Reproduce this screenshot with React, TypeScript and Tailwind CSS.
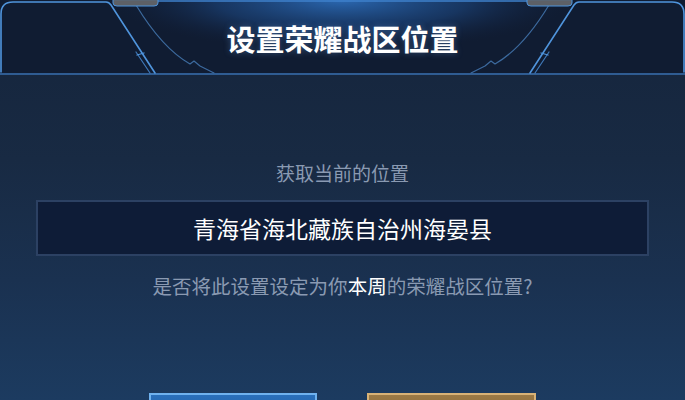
import React from "react";

const CJK = { fontFamily: '"Noto Sans CJK SC", "Noto Sans", sans-serif' };

function HeaderFrame() {
  const side = (
    <g fill="none" strokeLinecap="round" strokeLinejoin="round">
      {/* outer frame edge running into the diagonal */}
      <path d="M1,72 L1,14 Q1,2 13,2 L106,2 Q109,2 111,5 L155,73" stroke="#4f94dc" strokeWidth="1.6" />
      {/* small bracket on the diagonal */}
      <path d="M136,52 L150,73" stroke="#3f78b8" strokeWidth="1.2" />
      <path d="M137,55 L144,53" stroke="#4f94dc" strokeWidth="1.3" />
      {/* inner arc with notch */}
      <path d="M136,5 Q162,48 190,64 L194,61 L200,66 L214,73" stroke="#3c6a9e" strokeWidth="1.2" />
      {/* tab at top */}
      <path d="M113,0 L113,3 Q113,6 117,6 L154,6 Q158,6 158,3 L158,0 Z" fill="#5d6066" stroke="#4f94dc" strokeWidth="1" />
    </g>
  );
  return (
    <svg className="absolute inset-0" width="685" height="74" viewBox="0 0 685 74">
      <defs>
        <radialGradient id="glow" cx="342" cy="0" r="230" gradientUnits="userSpaceOnUse" gradientTransform="translate(342 0) scale(1 0.22) translate(-342 0)">
          <stop offset="0" stopColor="#2c6cb8" stopOpacity="0.95" />
          <stop offset="0.55" stopColor="#1d4a86" stopOpacity="0.55" />
          <stop offset="1" stopColor="#122240" stopOpacity="0" />
        </radialGradient>
      </defs>
      <rect x="0" y="0" width="685" height="74" fill="url(#glow)" />
      <line x1="158" y1="1" x2="527" y2="1" stroke="#3f82cc" strokeWidth="1.5" />
      {side}
      <g transform="translate(685,0) scale(-1,1)">{side}</g>
    </svg>
  );
}

export default function App() {
  return (
    <div
      className="relative w-[685px] h-[400px] overflow-hidden flex flex-col bg-[linear-gradient(180deg,#15243b_0%,#182a43_40%,#1a3150_70%,#1c3b60_100%)]"
      style={CJK}
    >
      <div className="relative h-[73px] shrink-0 bg-[#101c32]">
        <HeaderFrame />
        <div className="relative h-full flex items-center justify-center pt-[4px]">
          <h1 className="text-[29px] font-bold text-white tracking-[0px] [text-shadow:0_0_6px_rgba(120,180,255,0.35)]">
            设置荣耀战区位置
          </h1>
        </div>
      </div>
      <div className="h-[2px] shrink-0 bg-[#2f5c92]" />

      <div className="flex flex-col items-center pt-[86px]">
        <p className="text-[19px] leading-[24px] text-[#8a9ab2]">获取当前的位置</p>
        <div className="mt-[15px] w-[613px] h-[56px] flex items-center justify-center bg-[#0e1c37] border-2 border-[#2c4163]">
          <span className="text-[23px] text-white">青海省海北藏族自治州海晏县</span>
        </div>
        <p className="mt-[18px] text-[19.5px] leading-[24px] text-[#8a9ab2]">
          是否将此设置设定为你<span className="text-white">本周</span>的荣耀战区位置?
        </p>
        <div className="mt-[95px] flex gap-[50px]">
          <div className="w-[168px] h-[44px] border-2 border-[#6fb2ee] bg-[linear-gradient(180deg,#2a70bb,#1b5596)]" />
          <div className="w-[169px] h-[44px] border-2 border-[#d8b276] bg-[linear-gradient(180deg,#9c7a45,#7a5a2e)]" />
        </div>
      </div>
    </div>
  );
}
